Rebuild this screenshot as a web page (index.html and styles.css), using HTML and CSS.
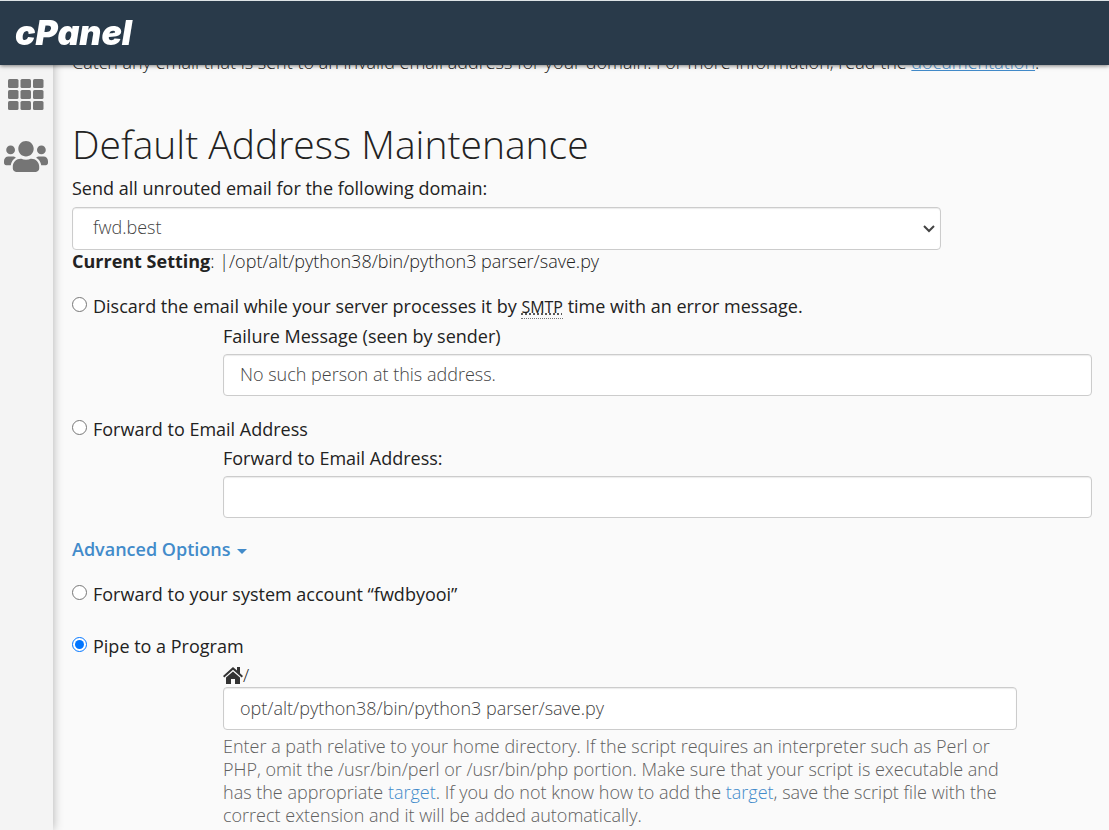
FILE: index.html
```html
<!DOCTYPE html>
<html lang="en">
<head>
<meta charset="utf-8">
<meta name="viewport" content="width=device-width, initial-scale=1">
<title>cPanel - Default Address Maintenance</title>
<link rel="stylesheet" href="styles.css">
</head>
<body>
<header class="topbar"><a class="brand" href="#">cPanel</a></header>
<div class="shell">
  <nav class="sidebar" aria-label="Main">
    <a href="#" aria-label="Tools">
      <svg width="36" height="32" viewBox="0 0 36 32" fill="currentColor" aria-hidden="true">
        <rect x="0" y="0" width="10.5" height="9" rx="1.5"/><rect x="12.5" y="0" width="10.5" height="9" rx="1.5"/><rect x="25" y="0" width="10.5" height="9" rx="1.5"/>
        <rect x="0" y="11" width="10.5" height="9" rx="1.5"/><rect x="12.5" y="11" width="10.5" height="9" rx="1.5"/><rect x="25" y="11" width="10.5" height="9" rx="1.5"/>
        <rect x="0" y="22" width="10.5" height="9" rx="1.5"/><rect x="12.5" y="22" width="10.5" height="9" rx="1.5"/><rect x="25" y="22" width="10.5" height="9" rx="1.5"/>
      </svg>
    </a>
    <a href="#" aria-label="User Manager">
      <svg width="44" height="31" viewBox="0 0 640 448" fill="currentColor" aria-hidden="true">
        <path transform="translate(0 -32)" d="M96 224c35.300 0 64-28.700 64-64s-28.700-64-64-64-64 28.700-64 64 28.700 64 64 64zm448 0c35.300 0 64-28.700 64-64s-28.700-64-64-64-64 28.700-64 64 28.700 64 64 64zm32 32h-64c-17.600 0-33.500 7.100-45.100 18.600 40.300 22.100 68.900 62 75.100 109.400h66c17.700 0 32-14.300 32-32v-32c0-35.300-28.700-64-64-64zm-256 0c61.900 0 112-50.100 112-112S381.900 32 320 32 208 82.100 208 144s50.100 112 112 112zm76.800 32h-8.300c-20.800 10-43.900 16-68.500 16s-47.600-6-68.500-16h-8.300C179.600 288 128 339.600 128 403.200V432c0 26.500 21.500 48 48 48h288c26.500 0 48-21.500 48-48v-28.800c0-63.600-51.600-115.200-115.200-115.200zm-223.700-13.400C161.500 263.100 145.600 256 128 256H64c-35.300 0-64 28.700-64 64v32c0 17.700 14.300 32 32 32h65.900c6.300-47.400 34.900-87.300 75.200-109.400z"/>
      </svg>
    </a>
  </nav>
  <main class="content">
    <p class="intro">Catch any email that is sent to an invalid email address for your domain. For more information, read the <a href="#">documentation</a>.</p>
    <h1>Default Address Maintenance</h1>
    <form>
      <label class="label" for="domain">Send all unrouted email for the following domain:</label>
      <div class="select-wrap">
        <select id="domain" class="field select"><option>fwd.best</option></select>
        <svg class="chevron" width="12" height="8" viewBox="0 0 12 8" fill="none" stroke="#444" stroke-width="2" aria-hidden="true"><path d="M1 1l5 5 5-5"/></svg>
      </div>
      <p class="current"><strong>Current Setting</strong>: |/opt/alt/python38/bin/python3 parser/save.py</p>

      <div class="option">
        <input type="radio" name="action" id="discard">
        <label class="label" for="discard">Discard the email while your server processes it by <abbr title="Simple Mail Transfer Protocol">SMTP</abbr> time with an error message.</label>
      </div>
      <div class="detail">
        <label class="label" for="failure">Failure Message (seen by sender)</label>
        <input type="text" class="field" id="failure" value="No such person at this address.">
      </div>

      <div class="option">
        <input type="radio" name="action" id="forward">
        <label class="label" for="forward">Forward to Email Address</label>
      </div>
      <div class="detail">
        <label class="label" for="email">Forward to Email Address:</label>
        <input type="text" class="field" id="email">
      </div>

      <button type="button" class="advanced">Advanced Options <span class="caret"></span></button>

      <div class="option">
        <input type="radio" name="action" id="system">
        <label class="label" for="system">Forward to your system account “fwdbyooi”</label>
      </div>
      <div class="option option-pipe">
        <input type="radio" name="action" id="pipe" checked>
        <label class="label" for="pipe">Pipe to a Program</label>
      </div>
      <div class="detail detail-pipe">
        <label class="home" for="path" aria-label="Home directory path">
          <svg width="20" height="17" viewBox="0 0 20 17" fill="#333" aria-hidden="true"><path d="M10 0L0 9l1.300 1.500L10 2.800l8.700 7.700L20 9l-3-2.700V0h-3v3.600z"/><path d="M10 4.400L3 10.500V17h5v-5h4v5h5v-6.500z"/></svg><span>/</span>
        </label>
        <input type="text" class="field" id="path" value="opt/alt/python38/bin/python3 parser/save.py">
        <p class="help">Enter a path relative to your home directory. If the script requires an interpreter such as Perl or PHP, omit the /usr/bin/perl or /usr/bin/php portion. Make sure that your script is executable and has the appropriate <a href="#">target</a>. If you do not know how to add the <a href="#">target</a>, save the script file with the correct extension and it will be added automatically.</p>
      </div>
    </form>
  </main>
</div>
</body>
</html>
```
FILE: styles.css
```css
* { box-sizing: border-box; }
html { overflow: hidden; }
body {
  margin: 0;
  background: #fafafa;
  color: #222;
  font: 300 18px/23px "Open Sans", sans-serif;
}
p, h1 { margin: 0; }
a { color: #428bca; text-decoration: none; }

.topbar {
  position: fixed;
  z-index: 2;
  top: 0;
  left: 0;
  right: 0;
  height: 65px;
  padding: 0 15px;
  display: flex;
  align-items: center;
  background: #293a4a;
  border-top: 1px solid #dde3e6;
  box-shadow: 0 1px 4px rgba(0, 0, 0, .5);
}
.brand {
  color: #fff;
  font: italic 900 34px/40px Inter, sans-serif;
}

.shell { display: flex; min-height: 100vh; }
.sidebar {
  flex: none;
  width: 53px;
  padding-top: 79px;
  display: flex;
  flex-direction: column;
  align-items: center;
  gap: 30px;
  background: #f4f4f4;
  box-shadow: 0 0 10px rgba(0, 0, 0, .3);
}
.sidebar a { display: flex; color: #757575; margin-right: 2px; }
.content { flex: 1; min-width: 0; padding: 51px 17px 0 19px; }

.intro a { text-decoration: underline; }
h1 { margin-top: 45px; font-size: 39px; line-height: 50px; font-weight: 300; }

.label { display: block; font-weight: 500; }
form > .label { margin: 8px 0 7px; }

.field {
  display: block;
  width: 100%;
  height: 42px;
  padding: 0 16px 2px;
  border: 1px solid #ccc;
  border-radius: 4px;
  background: #fff;
  color: #444;
  font: inherit;
  box-shadow: inset 0 1px 1px rgba(0, 0, 0, .08);
}
.select-wrap { position: relative; max-width: 869px; }
.select { height: 43px; padding: 0 20px 2px; appearance: none; }
.chevron { position: absolute; right: 6px; top: 18px; pointer-events: none; }
.current strong { font-weight: 700; }

.option { display: flex; gap: 6px; margin-top: 22px; }
.option input { flex: none; width: 15px; height: 15px; margin: 2px 0 0; }
abbr { font-weight: 400; font-size: 16px; border-bottom: 1px dotted #777; text-decoration: underline dotted; }

.detail { margin-left: 151px; padding-top: 6px; display: grid; gap: 6px; }
.advanced {
  display: flex;
  align-items: center;
  gap: 7px;
  margin-top: 20px;
  padding: 0;
  border: 0;
  background: none;
  color: #428bca;
  font: inherit;
  font-weight: 600;
}
.caret { margin-top: 3px; border: 5px solid transparent; border-top-color: #428bca; border-bottom: 0; }
.option-pipe { margin-top: 29px; }
.detail-pipe { max-width: 794px; gap: 0; }
.detail-pipe .field { height: 43px; }
.home { display: flex; align-items: center; }
.help { margin-top: 5px; color: #606060; }
```
